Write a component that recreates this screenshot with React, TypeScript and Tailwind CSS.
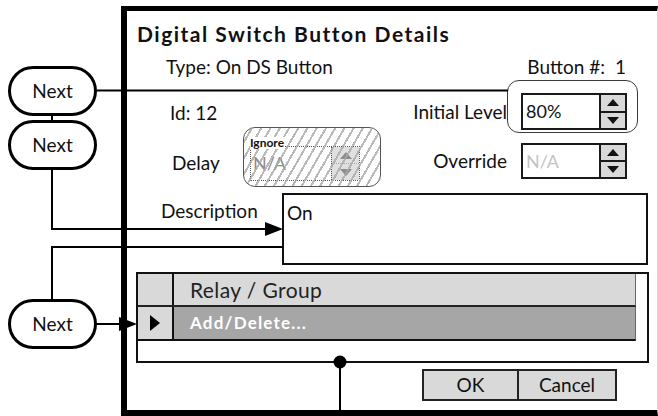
import React from "react";

const TriUp = () => (
  <svg width="12" height="7" viewBox="0 0 12 7">
    <polygon points="0,7 6,0 12,7" fill="#111" />
  </svg>
);

const TriDown = () => (
  <svg width="12" height="7" viewBox="0 0 12 7">
    <polygon points="0,0 12,0 6,7" fill="#111" />
  </svg>
);

function Spinbox({ value, muted, h = "h-[37px]" }: { value: string; muted?: boolean; h?: string }) {
  return (
    <div className={`flex w-[106px] border-2 border-[#1a1a1a] bg-white ${h}`}>
      <div
        className={`flex flex-1 items-center pl-[3px] text-[18px] ${
          muted ? "text-[#c4c4c4]" : "text-[#111]"
        }`}
      >
        {value}
      </div>
      <div className="flex w-[26px] flex-col border-l-2 border-[#1a1a1a] bg-[#d9d9d9]">
        <div className="flex flex-1 items-center justify-center border-b-2 border-[#1a1a1a]">
          <TriUp />
        </div>
        <div className="flex flex-1 items-center justify-center">
          <TriDown />
        </div>
      </div>
    </div>
  );
}

function NextBubble({ top }: { top: string }) {
  return (
    <div
      className={`absolute left-[8px] flex h-[50px] w-[89px] items-center justify-center rounded-full border-[3px] border-black bg-white text-[19px] text-[#111] ${top}`}
    >
      Next
    </div>
  );
}

export default function App() {
  return (
    <div className="relative h-[416px] w-[658px] overflow-hidden bg-white font-['Lato','Liberation_Sans',sans-serif] text-[#111]">
      {/* dialog */}
      <div className="ml-[121px] mt-[6px] flex h-[410px] w-[537px] flex-col border-t-[5px] border-b-[6px] border-l-[6px] border-r border-black border-r-[#d4d4d4]">
        <div className="mt-[11px] h-[24px] pl-[10px] text-[21px] font-bold leading-[24px] tracking-[1.5px]">
          Digital Switch Button Details
        </div>

        <div className="mt-[10px] flex h-[22px] items-center justify-between pl-[39px] pr-[31px] text-[19px] leading-[22px]">
          <span>Type: On DS Button</span>
          <span>
            Button #:<span className="ml-[10px]">1</span>
          </span>
        </div>

        <div className="flex h-[109px]">
          {/* left column */}
          <div className="flex w-[273px] flex-col pt-[24px]">
            <div className="h-[22px] pl-[43px] text-[19px] leading-[22px]">Id: 12</div>
            <div className="mt-[3px] flex items-start pl-[45px]">
              <div className="mt-[25px] h-[22px] w-[71px] text-[19px] leading-[22px]">Delay</div>
              <div className="relative h-[60px] w-[138px] overflow-hidden rounded-[12px] border-[1.5px] border-[#555] bg-white">
                <div className="ml-[6px] mt-[18px] flex h-[35px] w-[110px] border border-dotted border-[#555]">
                  <div className="flex flex-1 items-center pl-[2px] text-[18px] text-[#8c8c8c]">N/A</div>
                  <div className="flex w-[28px] flex-col border-l border-dotted border-[#555] bg-[#e0e0e0]">
                    <div className="flex flex-1 items-center justify-center border-b border-dotted border-[#555] opacity-40">
                      <TriUp />
                    </div>
                    <div className="flex flex-1 items-center justify-center opacity-40">
                      <TriDown />
                    </div>
                  </div>
                </div>
                <div className="absolute inset-0 bg-[repeating-linear-gradient(120deg,transparent_0px,transparent_6px,#a8a8a8cc_6px,#a8a8a8cc_8px)]" />
                <span className="absolute left-[6px] top-[9px] bg-white pr-[1px] text-[12px] font-bold leading-[12px]">
                  Ignore
                </span>
              </div>
            </div>
          </div>

          {/* right column */}
          <div className="flex flex-1 flex-col items-end pr-[30px] pt-[15px]">
            <div className="flex items-center gap-[14px]">
              <span className="text-[19px] leading-[22px]">Initial Level</span>
              <div className="relative">
                <div className="absolute -bottom-[3px] -left-[14px] -right-[11px] -top-[13px] rounded-[12px] border-[1.5px] border-[#3c3c3c]" />
                <Spinbox value="80%" />
              </div>
            </div>
            <div className="mt-[13px] flex items-center gap-[14px]">
              <span className="text-[19px] leading-[22px]">Override</span>
              <Spinbox value="N/A" muted h="h-[36px]" />
            </div>
          </div>
        </div>

        <div className="mt-[6px] flex pl-[34px]">
          <div className="mt-[7px] h-[22px] w-[121px] text-[19px] leading-[22px]">Description</div>
          <div className="h-[72px] w-[366px] border-2 border-[#111] pl-[3px] pt-[7px] text-[19px] leading-[22px]">
            On
          </div>
        </div>

        <div className="ml-[9px] mt-[7px] h-[91px] w-[513px] border-2 border-[#111] bg-white">
          <div className="flex h-[33px] w-[498px] border-b-2 border-r border-[#222] border-r-[#666]">
            <div className="w-[36px] border-r-2 border-[#111] bg-[#d9d9d9]" />
            <div className="flex flex-1 items-center bg-[#d9d9d9] pl-[16px] text-[21px] tracking-[0.4px] text-[#222]">
              Relay / Group
            </div>
          </div>
          <div className="flex h-[34px] w-[498px] border-b-2 border-r border-[#111] border-r-[#666]">
            <div className="flex w-[36px] items-center justify-center border-r-2 border-[#111] bg-[#d9d9d9]">
              <svg width="10" height="16" viewBox="0 0 10 16">
                <polygon points="0,0 10,8 0,16" fill="#000" />
              </svg>
            </div>
            <div className="flex flex-1 items-center bg-[#a6a6a6] pl-[16px] text-[17px] font-bold tracking-[1.2px] text-white">
              Add/Delete...
            </div>
          </div>
        </div>

        <div className="mt-[6px] flex justify-end pr-[40px]">
          <div className="flex h-[32px] border-2 border-[#222] bg-[#d9d9d9] text-[19px]">
            <div className="flex w-[95px] items-center justify-center border-r-2 border-[#222]">OK</div>
            <div className="flex w-[96px] items-center justify-center">Cancel</div>
          </div>
        </div>
      </div>

      {/* callouts */}
      <svg className="pointer-events-none absolute inset-0" width="658" height="416" viewBox="0 0 658 416">
        <g stroke="#000" strokeWidth="2" fill="none">
          <line x1="96" y1="90.5" x2="508" y2="90.5" />
          <line x1="52" y1="114" x2="52" y2="122" />
          <path d="M52 168 V229 H268" />
          <path d="M52 301 V247 H283" />
          <line x1="96" y1="324" x2="122" y2="324" />
          <line x1="340" y1="362" x2="340" y2="411" />
        </g>
        <polygon points="265,222 283,229 265,236" fill="#000" />
        <polygon points="119,317 137,324 119,331" fill="#000" />
        <circle cx="340" cy="362" r="6.5" fill="#000" />
      </svg>

      <NextBubble top="top-[66px]" />
      <NextBubble top="top-[120px]" />
      <NextBubble top="top-[299px]" />
    </div>
  );
}
